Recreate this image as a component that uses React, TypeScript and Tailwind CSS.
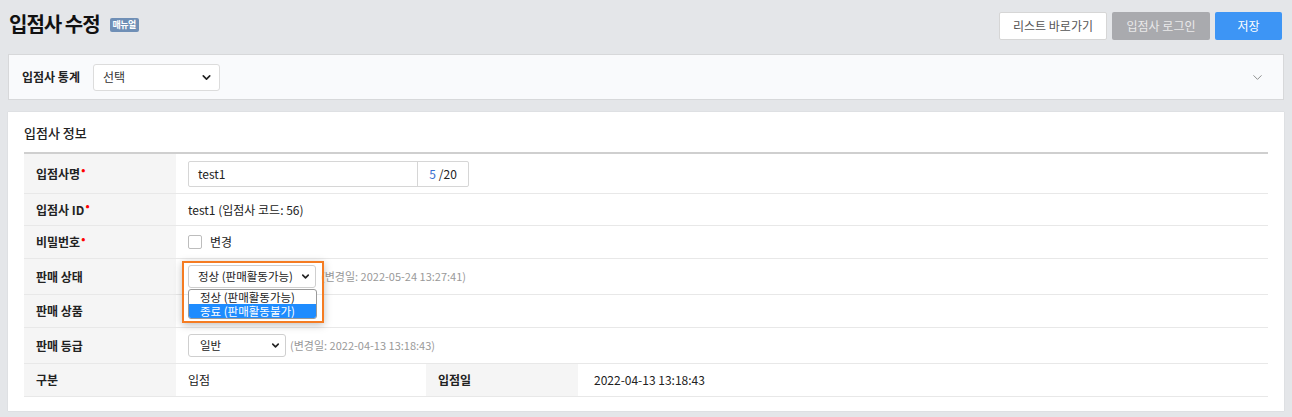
import { ChevronDown } from 'lucide-react';

const font = { fontFamily: '"Malgun Gothic", "Noto Sans CJK KR", "Noto Sans", sans-serif' };

const Label = ({ text, required }: { text: string; required?: boolean }) => (
  <div className="w-[152px] shrink-0 bg-[#f5f5f5] pl-3 flex items-center text-[12px] font-bold text-[#222]">
    {text}
    {required && <span className="text-[#ff0000] ml-[1px] -mt-2 text-[11px]">•</span>}
  </div>
);

const App = () => {
  return (
    <div className="w-[1292px] h-[417px] bg-[#e4e6e9] overflow-hidden" style={font}>
      {/* Header */}
      <div className="h-[54px] flex items-start justify-between pl-[9px] pr-[10px]">
        <div className="flex items-center mt-[10px]">
          <h1 className="text-[20px] font-bold text-[#111] leading-[28px] tracking-[-1px]">입점사 수정</h1>
          <span className="ml-[10px] mt-[1px] bg-[#6f8fb6] text-white text-[9px] font-bold px-[3px] h-[14px] leading-[14px] rounded-[2px] tracking-[-0.5px]">
            매뉴얼
          </span>
        </div>
        <div className="flex gap-[5px] mt-[12px]">
          <button className="w-[108px] h-[28px] bg-white border border-[#d6d6d6] rounded-[2px] text-[12px] text-[#555]">
            리스트 바로가기
          </button>
          <button className="w-[98px] h-[28px] bg-[#a9aaae] rounded-[2px] text-[12px] text-[#e9e9ea]">
            입점사 로그인
          </button>
          <button className="w-[67px] h-[28px] bg-[#3d95f5] rounded-[2px] text-[12px] text-white">
            저장
          </button>
        </div>
      </div>

      {/* Filter panel */}
      <div className="mx-[8px] h-[46px] bg-[#f9fafc] border border-[#d7d8da] flex items-center pl-[13px] pr-[18px]">
        <span className="text-[12px] font-bold text-[#222]">입점사 통계</span>
        <div className="ml-[13px] w-[127px] h-[27px] bg-white border border-[#dcdcdc] rounded-[3px] flex items-center justify-between pl-[9px] pr-[6px] text-[12px] text-[#333]">
          선택
          <ChevronDown className="w-[13px] h-[13px] text-[#222]" strokeWidth={3} />
        </div>
        <div className="flex-1" />
        <ChevronDown className="w-[15px] h-[15px] text-[#888]" strokeWidth={1.5} />
      </div>

      {/* Info panel */}
      <div className="mx-[8px] mt-[12px] h-[299px] bg-white px-[16px] pt-[12px] shadow-[0_0_1px_rgba(0,0,0,0.15)]">
        <h2 className="text-[13px] font-medium text-[#222] h-[28px] leading-[18px]">입점사 정보</h2>
        <div className="border-t-2 border-[#cfcfcf] text-[12px] text-[#222]">
          {/* 입점사명 */}
          <div className="flex h-[40px] border-b border-[#e8e8e8]">
            <Label text="입점사명" required />
            <div className="flex items-center pl-3">
              <div className="flex w-[281px] h-[26px] border border-[#d6d6d6] rounded-[2px]">
                <div className="w-[229px] border-r border-[#d6d6d6] flex items-center pl-[9px]">test1</div>
                <div className="flex-1 flex items-center justify-center">
                  <span className="text-[#3a6fd0]">5</span>
                  <span className="ml-[3px]">/20</span>
                </div>
              </div>
            </div>
          </div>
          {/* 입점사 ID */}
          <div className="flex h-[32px] border-b border-[#e8e8e8]">
            <Label text="입점사 ID" required />
            <div className="flex items-center pl-3">test1 (입점사 코드: 56)</div>
          </div>
          {/* 비밀번호 */}
          <div className="flex h-[33px] border-b border-[#e8e8e8]">
            <Label text="비밀번호" required />
            <div className="flex items-center pl-3">
              <span className="w-[14px] h-[14px] border border-[#bdbdbd] rounded-[2px] bg-white" />
              <span className="ml-[8px]">변경</span>
            </div>
          </div>
          {/* 판매 상태 */}
          <div className="flex h-[36px] border-b border-[#e8e8e8]">
            <Label text="판매 상태" />
            <div className="relative flex items-center pl-3">
              <div className="w-[128px] h-[23px] border border-[#cfcfcf] rounded-[3px] flex items-center justify-between pl-[9px] pr-[4px] whitespace-nowrap text-[11.5px]">
                정상 (판매활동가능)
                <ChevronDown className="w-[11px] h-[11px] shrink-0" strokeWidth={3.5} />
              </div>
              <span className="ml-[5px] text-[#999] text-[11px]">(변경일: 2022-05-24 13:27:41)</span>
              {/* open dropdown, highlighted */}
              <div className="absolute left-[6px] top-[2px] w-[142px] h-[62px] border-2 border-[#f57c22] shadow-[0_2px_8px_rgba(0,0,0,0.25)] z-10">
                <div className="absolute left-[4px] top-[26px] w-[129px] h-[30px] bg-white border border-[#9a9a9a] rounded-[3px] overflow-hidden text-[11.5px] leading-[14px] whitespace-nowrap">
                  <div className="pl-[11px] h-[14px]">정상 (판매활동가능)</div>
                  <div className="pl-[11px] h-[14px] bg-[#1e8cff] text-white">종료 (판매활동불가)</div>
                </div>
              </div>
            </div>
          </div>
          {/* 판매 상품 */}
          <div className="flex h-[33px] border-b border-[#e8e8e8]">
            <Label text="판매 상품" />
            <div className="flex-1" />
          </div>
          {/* 판매 등급 */}
          <div className="flex h-[36px] border-b border-[#e8e8e8]">
            <Label text="판매 등급" />
            <div className="flex items-center pl-3">
              <div className="w-[98px] h-[23px] border border-[#cfcfcf] rounded-[3px] flex items-center justify-between pl-[11px] pr-[4px] text-[11.5px]">
                일반
                <ChevronDown className="w-[11px] h-[11px]" strokeWidth={3.5} />
              </div>
              <span className="ml-[4px] text-[#999] text-[11px]">(변경일: 2022-04-13 13:18:43)</span>
            </div>
          </div>
          {/* 구분 / 입점일 */}
          <div className="flex h-[33px] border-b border-[#e8e8e8]">
            <Label text="구분" />
            <div className="w-[250px] flex items-center pl-3">입점</div>
            <Label text="입점일" />
            <div className="flex items-center pl-[16px]">2022-04-13 13:18:43</div>
          </div>
        </div>
      </div>
    </div>
  );
};

export default App;
